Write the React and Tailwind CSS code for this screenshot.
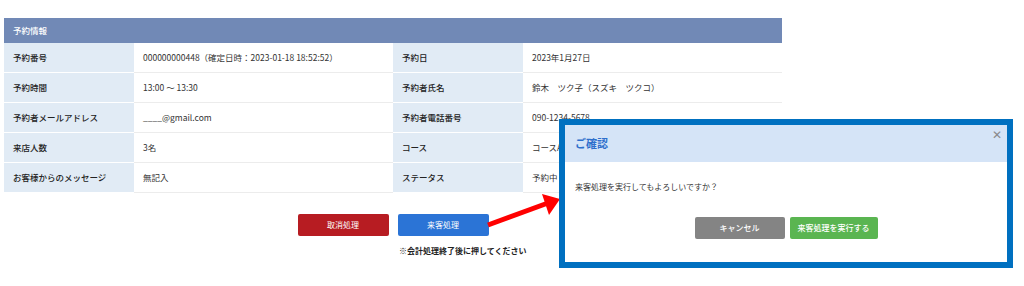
import React from 'react'

const rows = [
  ['予約番号', '000000000448（確定日時：2023-01-18 18:52:52）', '予約日', '2023年1月27日'],
  ['予約時間', '13:00 ～ 13:30', '予約者氏名', '鈴木　ツク子（スズキ　ツクコ）'],
  ['予約者メールアドレス', '____@gmail.com', '予約者電話番号', '090-1234-5678'],
  ['来店人数', '3名', 'コース', 'コースA'],
  ['お客様からのメッセージ', '無記入', 'ステータス', '予約中'],
]

function Label({ children }) {
  return (
    <div className="h-[30px] flex items-center px-[9px] bg-[#e1ebf5] border-b border-white text-[8.5px] font-medium text-[#222]">
      {children}
    </div>
  )
}

function Value({ children }) {
  return (
    <div className="h-[30px] flex items-center px-[9px] bg-white border-b border-[#ececec] text-[8.5px] text-[#333]">
      {children}
    </div>
  )
}

export default function App() {
  return (
    <div
      className="relative w-[1024px] h-[286px] bg-white overflow-hidden"
      style={{ fontFamily: '"Noto Sans CJK JP", "Noto Sans", sans-serif' }}
    >
      {/* reservation table */}
      <div className="ml-[4px] mt-[18px] w-[778px]">
        <div className="h-[25px] flex items-center px-[9px] bg-[#7189b6] text-white text-[8.5px] font-medium">
          予約情報
        </div>
        <div className="grid grid-cols-[130px_259px_130px_259px] border-r border-[#ececec]">
          {rows.map((r) => (
            <React.Fragment key={r[0]}>
              <Label>{r[0]}</Label>
              <Value>{r[1]}</Value>
              <Label>{r[2]}</Label>
              <Value>{r[3]}</Value>
            </React.Fragment>
          ))}
        </div>
      </div>

      {/* action buttons */}
      <div className="w-[778px] ml-[4px] mt-[21px] flex justify-center gap-[9px]">
        <button className="w-[91px] h-[22px] rounded-[2px] bg-[#b71c22] text-white text-[8px]">取消処理</button>
        <button className="w-[91px] h-[22px] rounded-[2px] bg-[#2b74d6] text-white text-[8px]">来客処理</button>
      </div>
      <p className="ml-[399px] mt-[9px] text-[8px] font-bold text-[#222]">※会計処理終了後に押してください</p>

      {/* arrow */}
      <svg className="absolute left-[484px] top-[192px]" width="80" height="40" viewBox="0 0 80 40">
        <line x1="4" y1="33" x2="64" y2="11" stroke="#ff0000" strokeWidth="5" />
        <polygon points="76,7 58,2 65,23" fill="#ff0000" />
      </svg>

      {/* confirm dialog */}
      <div className="absolute left-[559px] top-[119px] w-[454px] h-[149px] border-[6px] border-[#0070c0] bg-white flex flex-col">
        <div className="relative h-[37px] bg-[#d5e4f7] flex items-center px-[10px]">
          <span className="text-[11px] font-bold text-[#2e6fcc]">ご確認</span>
          <span className="absolute right-[5px] top-[3px] text-[12px] leading-none text-[#8a8a8a]">✕</span>
        </div>
        <div className="px-[10px] pt-[19px] text-[8px] text-[#333]">来客処理を実行してもよろしいですか？</div>
        <div className="mt-[24px] flex justify-center gap-[5px]">
          <button className="w-[90px] h-[22px] rounded-[2px] bg-[#848484] text-white text-[8px] font-medium">キャンセル</button>
          <button className="w-[88px] h-[22px] rounded-[2px] bg-[#5ab551] text-white text-[8px] font-medium">来客処理を実行する</button>
        </div>
      </div>
    </div>
  )
}
